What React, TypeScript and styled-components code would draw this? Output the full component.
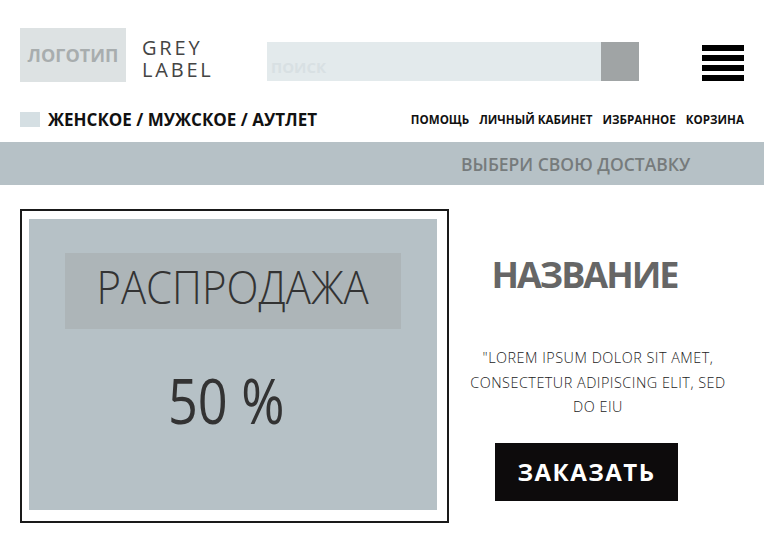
import React from "react";
import styled, { createGlobalStyle } from "styled-components";

const Global = createGlobalStyle`
  body {
    margin: 0;
    background: #fff;
    font-family: "Open Sans", "Liberation Sans", sans-serif;
  }
`;

const Page = styled.div`
  width: 764px;
  height: 551px;
  overflow: hidden;
`;

const Header = styled.header`
  display: flex;
  align-items: flex-end;
  padding: 28px 20px 0 20px;
  height: 54px;
`;

const Logo = styled.div`
  width: 106px;
  height: 54px;
  background: #dde2e3;
  color: #a8adae;
  font-weight: 700;
  font-size: 18px;
  display: flex;
  align-items: center;
  justify-content: center;
`;

const Brand = styled.div`
  width: 74px;
  margin-left: 16px;
  margin-bottom: 1px;
  color: #444;
  font-size: 20px;
  letter-spacing: 2.8px;
  line-height: 22px;
`;

const Search = styled.div`
  display: flex;
  margin-left: 51px;
  margin-bottom: 1px;
  height: 39px;
`;

const SearchField = styled.div`
  width: 334px;
  background: #e3eaec;
  color: #d8e0e3;
  font-weight: 700;
  font-size: 15px;
  padding: 15px 0 0 4px;
  box-sizing: border-box;
  line-height: 20px;
`;

const SearchButton = styled.div`
  width: 38px;
  background: #a0a4a5;
`;

const Burger = styled.div`
  margin-left: auto;
  margin-bottom: 1px;
  width: 42px;
  display: flex;
  flex-direction: column;
  gap: 4px;
`;

const BurgerBar = styled.span`
  display: block;
  height: 6px;
  background: #000;
`;

const NavRow = styled.nav`
  display: flex;
  align-items: center;
  padding: 0 20px;
  margin-top: 26px;
  height: 22px;
`;

const Swatch = styled.span`
  width: 20px;
  height: 15px;
  background: #d5dfe3;
  margin-right: 8px;
`;

const Sections = styled.span`
  font-weight: 700;
  font-size: 17px;
  color: #111;
`;

const Links = styled.div`
  margin-left: auto;
  display: flex;
  gap: 10px;
`;

const NavLink = styled.a`
  font-weight: 700;
  font-size: 11.6px;
  color: #111;
  text-decoration: none;
`;

const Delivery = styled.div`
  margin-top: 12px;
  height: 43px;
  background: #b6c1c6;
  display: flex;
  align-items: center;
  padding-left: 461px;
  color: #767b7c;
  font-weight: 600;
  font-size: 17.5px;
`;

const Main = styled.main`
  display: flex;
  padding: 24px 0 0 20px;
`;

const Card = styled.div`
  width: 429px;
  height: 314px;
  box-sizing: border-box;
  border: 2px solid #1a1a1a;
  padding: 8px 10px 11px 7px;
`;

const Panel = styled.div`
  height: 100%;
  background: #b6c1c6;
  display: flex;
  flex-direction: column;
  align-items: center;
  padding-top: 34px;
  box-sizing: border-box;
`;

const SaleBox = styled.div`
  width: 336px;
  height: 76px;
  background: #adb5b8;
  display: flex;
  align-items: center;
  justify-content: center;
  padding-bottom: 10px;
  box-sizing: border-box;
`;

const SaleText = styled.span`
  font-weight: 300;
  font-size: 46px;
  color: #333;
  display: inline-block;
  transform: scaleX(0.91);
`;

const Discount = styled.span`
  margin-top: 39px;
  margin-right: 14px;
  font-weight: 400;
  font-size: 63px;
  line-height: 1;
  color: #333;
  display: inline-block;
  transform: scaleX(0.83);
`;

const Info = styled.div`
  flex: 1;
  display: flex;
  flex-direction: column;
  align-items: center;
  padding-top: 44px;
`;

const Title = styled.h1`
  margin: 0 44px 0 0;
  font-weight: 700;
  font-size: 36px;
  letter-spacing: -2px;
  color: #666;
  line-height: 44px;
`;

const Blurb = styled.p`
  margin: 49px 17px 0 0;
  text-align: center;
  font-size: 14.4px;
  font-weight: 300;
  letter-spacing: 0.5px;
  line-height: 24.5px;
  color: #222;
  width: 272px;
`;

const OrderButton = styled.button`
  margin: 23px 40px 0 0;
  width: 183px;
  height: 58px;
  border: none;
  background: #0d0b0c;
  color: #fff;
  font-family: "Open Sans", "Liberation Sans", sans-serif;
  font-weight: 700;
  font-size: 24px;
  letter-spacing: 1.5px;
`;

export default function App() {
  return (
    <Page>
      <Global />
      <Header>
        <Logo>ЛОГОТИП</Logo>
        <Brand>
          GREY
          <br />
          LABEL
        </Brand>
        <Search>
          <SearchField>ПОИСК</SearchField>
          <SearchButton />
        </Search>
        <Burger>
          <BurgerBar />
          <BurgerBar />
          <BurgerBar />
          <BurgerBar />
        </Burger>
      </Header>
      <NavRow>
        <Swatch />
        <Sections>ЖЕНСКОЕ / МУЖСКОЕ / АУТЛЕТ</Sections>
        <Links>
          <NavLink href="#">ПОМОЩЬ</NavLink>
          <NavLink href="#">ЛИЧНЫЙ КАБИНЕТ</NavLink>
          <NavLink href="#">ИЗБРАННОЕ</NavLink>
          <NavLink href="#">КОРЗИНА</NavLink>
        </Links>
      </NavRow>
      <Delivery>ВЫБЕРИ СВОЮ ДОСТАВКУ</Delivery>
      <Main>
        <Card>
          <Panel>
            <SaleBox>
              <SaleText>РАСПРОДАЖА</SaleText>
            </SaleBox>
            <Discount>50 %</Discount>
          </Panel>
        </Card>
        <Info>
          <Title>НАЗВАНИЕ</Title>
          <Blurb>
            "LOREM IPSUM DOLOR SIT AMET, CONSECTETUR ADIPISCING ELIT, SED DO EIU
          </Blurb>
          <OrderButton>ЗАКАЗАТЬ</OrderButton>
        </Info>
      </Main>
    </Page>
  );
}
